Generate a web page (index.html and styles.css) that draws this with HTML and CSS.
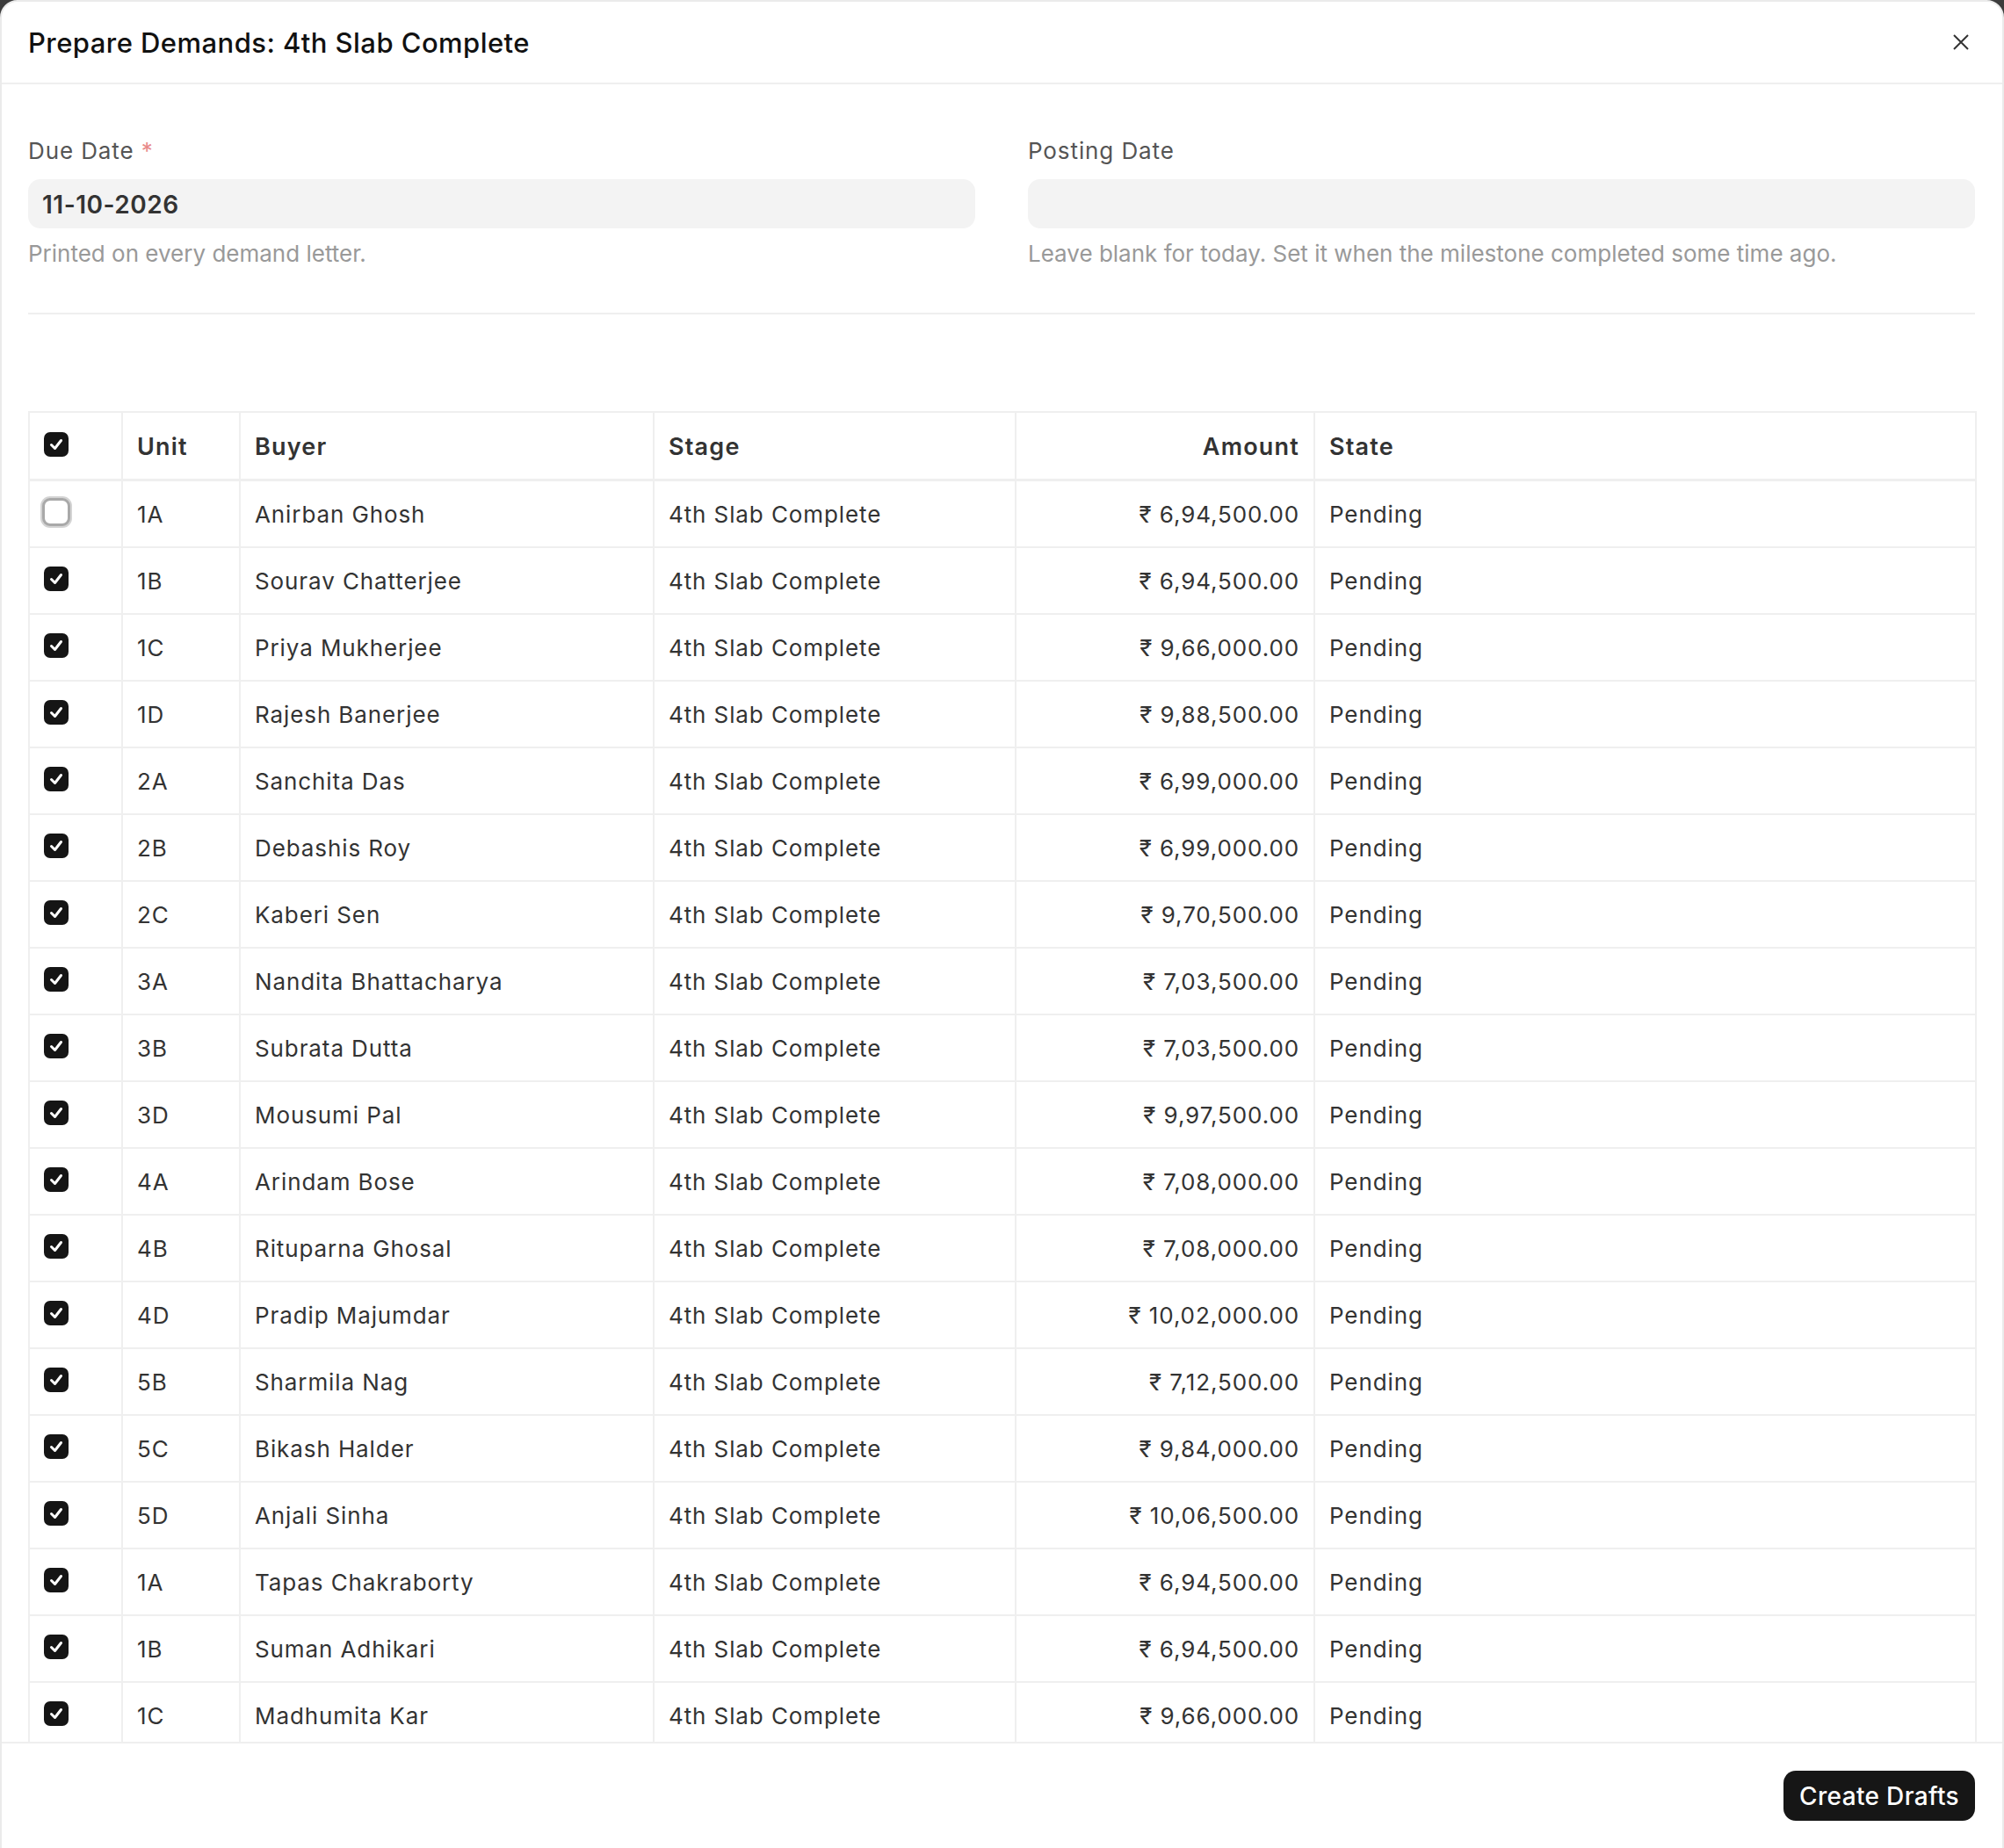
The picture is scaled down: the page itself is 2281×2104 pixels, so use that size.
FILE: index.html
```html
<!DOCTYPE html>
<html lang="en">
<head>
<meta charset="utf-8">
<title>Prepare Demands</title>
<link rel="stylesheet" href="styles.css">
</head>
<body>
<div class="dialog">
  <header class="dlg-header">
    <h1 class="dlg-title">Prepare Demands: 4th Slab Complete</h1>
    <button class="close-btn" aria-label="Close">
      <svg width="20" height="20" viewBox="0 0 20 20"><path d="M2 2L18 18M18 2L2 18" stroke="#333" stroke-width="2" fill="none"/></svg>
    </button>
  </header>
  <main class="dlg-body">
    <div class="form-row">
      <div class="field">
        <label class="field-label">Due Date <span class="req">*</span></label>
        <div class="input">11-10-2026</div>
        <div class="help">Printed on every demand letter.</div>
      </div>
      <div class="field">
        <label class="field-label">Posting Date</label>
        <div class="input"></div>
        <div class="help">Leave blank for today. Set it when the milestone completed some time ago.</div>
      </div>
    </div>
    <hr class="divider">
    <table class="grid">
      <colgroup>
        <col class="c-check"><col class="c-unit"><col class="c-buyer"><col class="c-stage"><col class="c-amount"><col class="c-state">
      </colgroup>
      <thead>
        <tr>
          <th><span class="cb on"><svg viewBox="0 0 28 28" width="28" height="28"><path d="M8.5 14.5L12.5 18.5L19.5 9.5" stroke="#fff" stroke-width="3" fill="none" stroke-linecap="round" stroke-linejoin="round"/></svg></span></th>
          <th>Unit</th><th>Buyer</th><th>Stage</th><th class="num">Amount</th><th>State</th>
        </tr>
      </thead>
      <tbody id="rows"></tbody>
    </table>
  </main>
  <footer class="dlg-footer">
    <button class="primary">Create Drafts</button>
  </footer>
</div>
<script src="app.js"></script>
</body>
</html>
```

FILE: app.js
```js
const data = [
  ["1A","Anirban Ghosh","6,94,500.00",false],
  ["1B","Sourav Chatterjee","6,94,500.00",true],
  ["1C","Priya Mukherjee","9,66,000.00",true],
  ["1D","Rajesh Banerjee","9,88,500.00",true],
  ["2A","Sanchita Das","6,99,000.00",true],
  ["2B","Debashis Roy","6,99,000.00",true],
  ["2C","Kaberi Sen","9,70,500.00",true],
  ["3A","Nandita Bhattacharya","7,03,500.00",true],
  ["3B","Subrata Dutta","7,03,500.00",true],
  ["3D","Mousumi Pal","9,97,500.00",true],
  ["4A","Arindam Bose","7,08,000.00",true],
  ["4B","Rituparna Ghosal","7,08,000.00",true],
  ["4D","Pradip Majumdar","10,02,000.00",true],
  ["5B","Sharmila Nag","7,12,500.00",true],
  ["5C","Bikash Halder","9,84,000.00",true],
  ["5D","Anjali Sinha","10,06,500.00",true],
  ["1A","Tapas Chakraborty","6,94,500.00",true],
  ["1B","Suman Adhikari","6,94,500.00",true],
  ["1C","Madhumita Kar","9,66,000.00",true]
];
const check = '<svg viewBox="0 0 28 28" width="28" height="28"><path d="M8.5 14.5L12.5 18.5L19.5 9.5" stroke="#fff" stroke-width="3" fill="none" stroke-linecap="round" stroke-linejoin="round"/></svg>';
const tbody = document.getElementById("rows");
tbody.innerHTML = data.map(([u,b,a,c]) =>
  `<tr><td>${c ? '<span class="cb on">'+check+'</span>' : '<span class="cb off"></span>'}</td>` +
  `<td>${u}</td><td>${b}</td><td>4th Slab Complete</td><td class="num">₹ ${a}</td><td>Pending</td></tr>`
).join("");
```

FILE: styles.css
```css
html, body {
  margin: 0;
  padding: 0;
  height: 2104px;
  overflow: hidden;
  background: #3c3c3c;
}
body {
  font-family: Inter, "Noto Sans", sans-serif;
  color: #333;
}
.dialog {
  box-sizing: border-box;
  width: 2281px;
  height: 2106px;
  background: #fff;
  border: 2px solid #ebebeb;
  border-radius: 20px 20px 0 0;
  display: flex;
  flex-direction: column;
  overflow: hidden;
}
.dlg-header {
  flex: none;
  height: 92px;
  border-bottom: 2px solid #efefef;
  display: flex;
  align-items: center;
  justify-content: space-between;
  padding: 0 37px 0 30px;
}
.dlg-title {
  margin: 0;
  font-size: 31px;
  font-weight: 500;
  color: #111;
  letter-spacing: 0.45px;
}
.close-btn {
  border: 0;
  background: none;
  padding: 0;
  width: 20px;
  height: 20px;
  display: flex;
}
.dlg-body {
  flex: 1;
  min-height: 0;
  overflow: hidden;
  padding: 61px 31px 0 30px;
}
.form-row {
  display: grid;
  grid-template-columns: 1fr 1fr;
  column-gap: 60px;
}
.field-label {
  display: block;
  font-size: 26px;
  line-height: 30px;
  letter-spacing: 0.9px;
  color: #555;
}
.req { color: #e88a8a; }
.input {
  margin-top: 17px;
  height: 56px;
  box-sizing: border-box;
  background: #f3f3f3;
  border-radius: 14px;
  padding: 2px 16px 0;
  display: flex;
  align-items: center;
  font-size: 28px;
  font-weight: 600;
  letter-spacing: 0.5px;
  color: #333;
}
.help {
  margin-top: 14px;
  font-size: 26px;
  line-height: 30px;
  color: #999;
}
.divider {
  border: 0;
  border-top: 2px solid #efefef;
  margin: 52px 0 110px;
}
.grid {
  width: 100%;
  table-layout: fixed;
  border-collapse: collapse;
  border: 2px solid #efefef;
  font-size: 26px;
  letter-spacing: 0.9px;
}
.c-check { width: 106px; }
.c-unit { width: 134px; }
.c-buyer { width: 471px; }
.c-stage { width: 412px; }
.c-amount { width: 340px; }
.c-state { width: 753px; }
.grid th, .grid td {
  border: 2px solid #efefef;
  padding: 0 16px;
  text-align: left;
  vertical-align: middle;
  white-space: nowrap;
  color: #333;
}
.grid th {
  height: 73px;
  padding-top: 2px;
  font-size: 27px;
  font-weight: 600;
  letter-spacing: 1.2px;
  border-bottom-width: 3px;
}
.grid td {
  height: 73px;
  padding-top: 1px;
}
.grid .num { text-align: right; }
.cb {
  display: block;
  box-sizing: border-box;
  width: 28px;
  height: 28px;
  border-radius: 7px;
  margin-top: -6px;
}
.cb svg { display: block; }
.cb.on { background: #151515; }
.cb.off {
  width: 32px;
  height: 32px;
  margin-left: -2px;
  border: 3px solid #a9a9a9;
  border-radius: 9px;
  background: #fff;
  box-shadow: 0 0 0 2px #d4d4d4;
}
.dlg-footer {
  flex: none;
  border-top: 2px solid #efefef;
  padding: 31px 31px 31px 0;
  display: flex;
  justify-content: flex-end;
}
.primary {
  height: 57px;
  padding: 0 18px;
  border: 0;
  border-radius: 14px;
  background: #161616;
  color: #fff;
  font-family: Inter, "Noto Sans", sans-serif;
  font-size: 28px;
  font-weight: 500;
  letter-spacing: 0.35px;
}
```
